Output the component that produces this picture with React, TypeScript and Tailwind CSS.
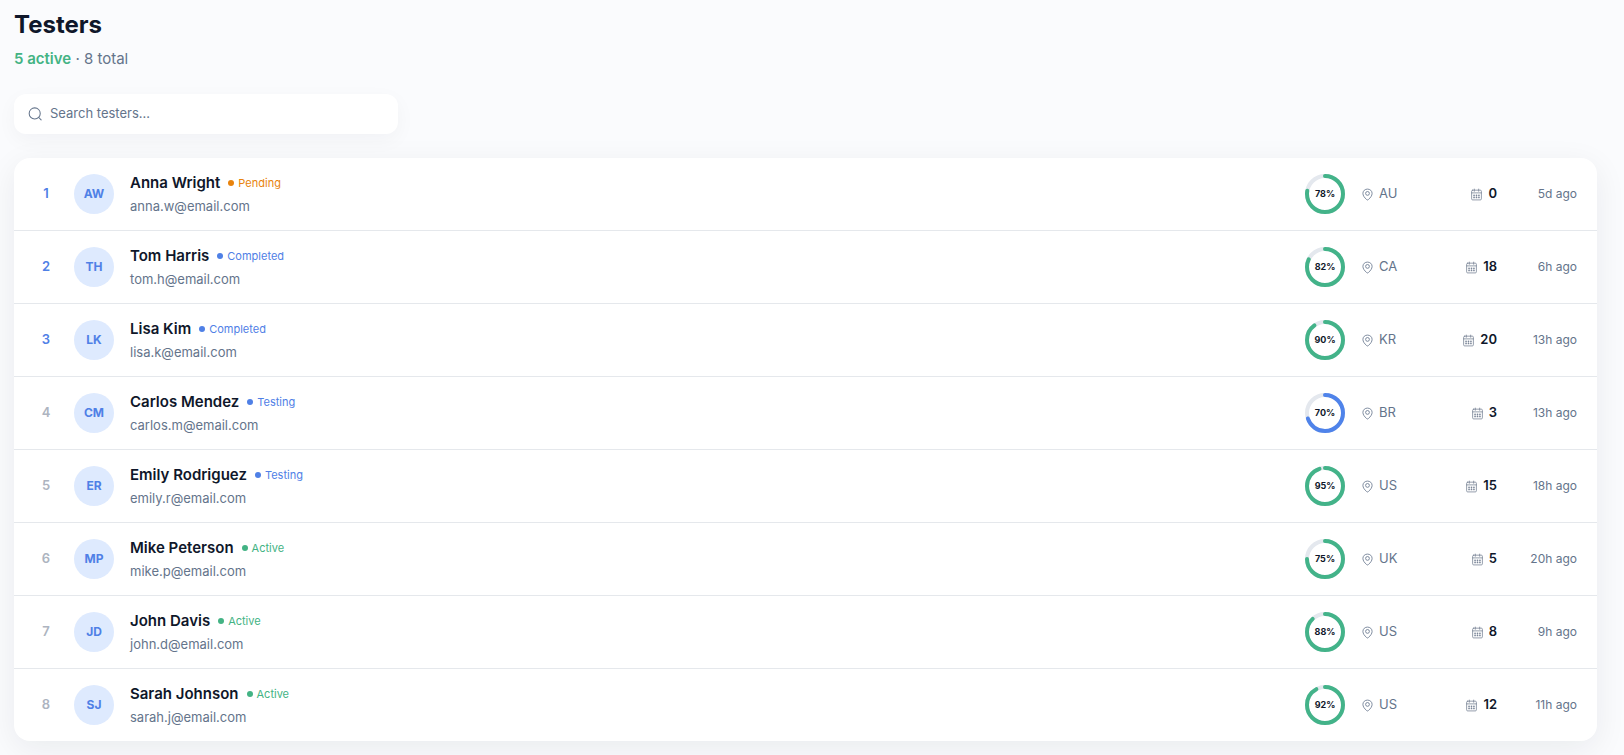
import React from "react";

type Status = "Pending" | "Completed" | "Testing" | "Active";

interface Tester {
  name: string;
  initials: string;
  email: string;
  status: Status;
  score: number;
  country: string;
  days: number;
  seen: string;
}

const testers: Tester[] = [
  { name: "Anna Wright", initials: "AW", email: "anna.w@email.com", status: "Pending", score: 78, country: "AU", days: 0, seen: "5d ago" },
  { name: "Tom Harris", initials: "TH", email: "tom.h@email.com", status: "Completed", score: 82, country: "CA", days: 18, seen: "6h ago" },
  { name: "Lisa Kim", initials: "LK", email: "lisa.k@email.com", status: "Completed", score: 90, country: "KR", days: 20, seen: "13h ago" },
  { name: "Carlos Mendez", initials: "CM", email: "carlos.m@email.com", status: "Testing", score: 70, country: "BR", days: 3, seen: "13h ago" },
  { name: "Emily Rodriguez", initials: "ER", email: "emily.r@email.com", status: "Testing", score: 95, country: "US", days: 15, seen: "18h ago" },
  { name: "Mike Peterson", initials: "MP", email: "mike.p@email.com", status: "Active", score: 75, country: "UK", days: 5, seen: "20h ago" },
  { name: "John Davis", initials: "JD", email: "john.d@email.com", status: "Active", score: 88, country: "US", days: 8, seen: "9h ago" },
  { name: "Sarah Johnson", initials: "SJ", email: "sarah.j@email.com", status: "Active", score: 92, country: "US", days: 12, seen: "11h ago" },
];

const statusColor: Record<Status, string> = {
  Pending: "text-[#e8830c]",
  Completed: "text-[#4f80e6]",
  Testing: "text-[#4f80e6]",
  Active: "text-[#43b384]",
};

function SearchIcon() {
  return (
    <svg className="size-3.5 shrink-0 text-[#64748b]" viewBox="0 0 24 24" fill="none" stroke="currentColor" strokeWidth="1.8" strokeLinecap="round" strokeLinejoin="round" aria-hidden="true">
      <circle cx="11.5" cy="11" r="9.5" />
      <path d="M18.5 18 22.5 22" />
    </svg>
  );
}

function PinIcon() {
  return (
    <svg className="size-[13px] shrink-0" viewBox="0 0 24 24" fill="none" stroke="currentColor" strokeWidth="1.5" aria-hidden="true">
      <path d="M13.62 21.37a2.37 2.37 0 0 1-3.24 0C6.39 17.59 3.5 14.2 3.5 9.9 3.5 5.4 7.3 2 12 2s8.5 3.4 8.5 7.9c0 4.3-2.88 7.7-6.88 11.47Z" />
      <circle cx="12" cy="10" r="3.5" />
    </svg>
  );
}

function CalendarIcon() {
  return (
    <svg className="size-[13px] shrink-0" viewBox="0 0 24 24" fill="none" stroke="currentColor" strokeWidth="1.5" strokeLinecap="round" strokeLinejoin="round" aria-hidden="true">
      <path d="M16 2v4M8 2v4" />
      <path d="M5 4h14a2 2 0 0 1 2 2v14a2 2 0 0 1-2 2H5a2 2 0 0 1-2-2V6a2 2 0 0 1 2-2Z" />
      <path d="M3 9h18" />
      <path d="M7.5 13.5h.01M12 13.5h.01M16.5 13.5h.01M7.5 17.5h.01M12 17.5h.01M16.5 17.5h.01" strokeWidth="3.2" />
    </svg>
  );
}

function ScoreRing({ score }: { score: number }) {
  return (
    <div className="grid size-10 shrink-0 place-items-center">
      <svg className="col-start-1 row-start-1 size-10 -rotate-90" viewBox="0 0 40 40" fill="none" strokeWidth="4" aria-hidden="true">
        <circle cx="20" cy="20" r="18" stroke="#e4e8ee" />
        <circle
          cx="20"
          cy="20"
          r="18"
          pathLength="100"
          strokeDasharray={`${score} 100`}
          strokeLinecap="round"
          stroke={score >= 75 ? "#43b389" : "#4f83ea"}
        />
      </svg>
      <span className="col-start-1 row-start-1 text-[9px] font-bold text-[#0f172a]">{score}%</span>
    </div>
  );
}

function TesterRow({ tester, rank }: { tester: Tester; rank: number }) {
  return (
    <li className="border-b border-[#e5e8ec] last:border-b-0">
      <div className="flex min-h-[72px] items-center gap-4 px-5">
        <span className={`w-6 shrink-0 text-center text-[13px] font-semibold ${rank <= 3 ? "text-[#4f80e6]" : "text-[#adb4c0]"}`}>
          {rank}
        </span>
        <span className="grid size-10 shrink-0 place-items-center rounded-full bg-[#deeafe] text-xs font-bold text-[#4f80e6]">
          {tester.initials}
        </span>
        <div className="flex min-w-0 flex-1 flex-col">
          <div className="flex items-center gap-2">
            <h2 className="text-[15px] leading-6 font-semibold text-[#0f172a]">{tester.name}</h2>
            <span className={`flex items-center gap-1 text-[11px] ${statusColor[tester.status]}`}>
              <span className="size-1.5 rounded-full bg-current" />
              {tester.status}
            </span>
          </div>
          <p className="text-[13px] leading-[22px] text-[#64748b]">{tester.email}</p>
        </div>
        <ScoreRing score={tester.score} />
        <span className="flex w-14 shrink-0 items-center gap-[5px] text-[13px] text-[#64748b]">
          <PinIcon />
          {tester.country}
        </span>
        <span className="flex w-16 shrink-0 items-center justify-end gap-[5px] text-[#7b8698]">
          <CalendarIcon />
          <span className="text-[13px] font-semibold text-[#0f172a]">{tester.days}</span>
        </span>
        <span className="w-16 shrink-0 text-right text-xs text-[#64748b]">{tester.seen}</span>
      </div>
    </li>
  );
}

export default function App() {
  return (
    <main className="min-h-screen bg-[#fafbfd] pt-[9px] pr-[27px] pb-3.5 pl-3.5 font-['Inter','Liberation_Sans',sans-serif]">
      <header className="flex flex-col gap-1.5">
        <h1 className="text-2xl leading-8 font-bold text-[#0f172a]">Testers</h1>
        <p className="text-[15px] leading-6 text-[#64748b]">
          <span className="font-semibold text-[#43b384]">5 active</span> · 8 total
        </p>
      </header>
      <label className="mt-[23px] flex h-10 max-w-96 items-center gap-2 rounded-xl bg-white px-3.5 shadow-[0_6px_20px_rgba(15,23,42,0.04)]">
        <SearchIcon />
        <input
          type="search"
          aria-label="Search testers"
          placeholder="Search testers…"
          className="min-w-0 flex-1 bg-transparent text-[13px] text-[#0f172a] outline-none placeholder:text-[#64748b]"
        />
      </label>
      <ul className="mt-6 rounded-2xl bg-white shadow-[0_8px_32px_rgba(15,23,42,0.07)]">
        {testers.map((tester, index) => (
          <TesterRow key={tester.email} tester={tester} rank={index + 1} />
        ))}
      </ul>
    </main>
  );
}
